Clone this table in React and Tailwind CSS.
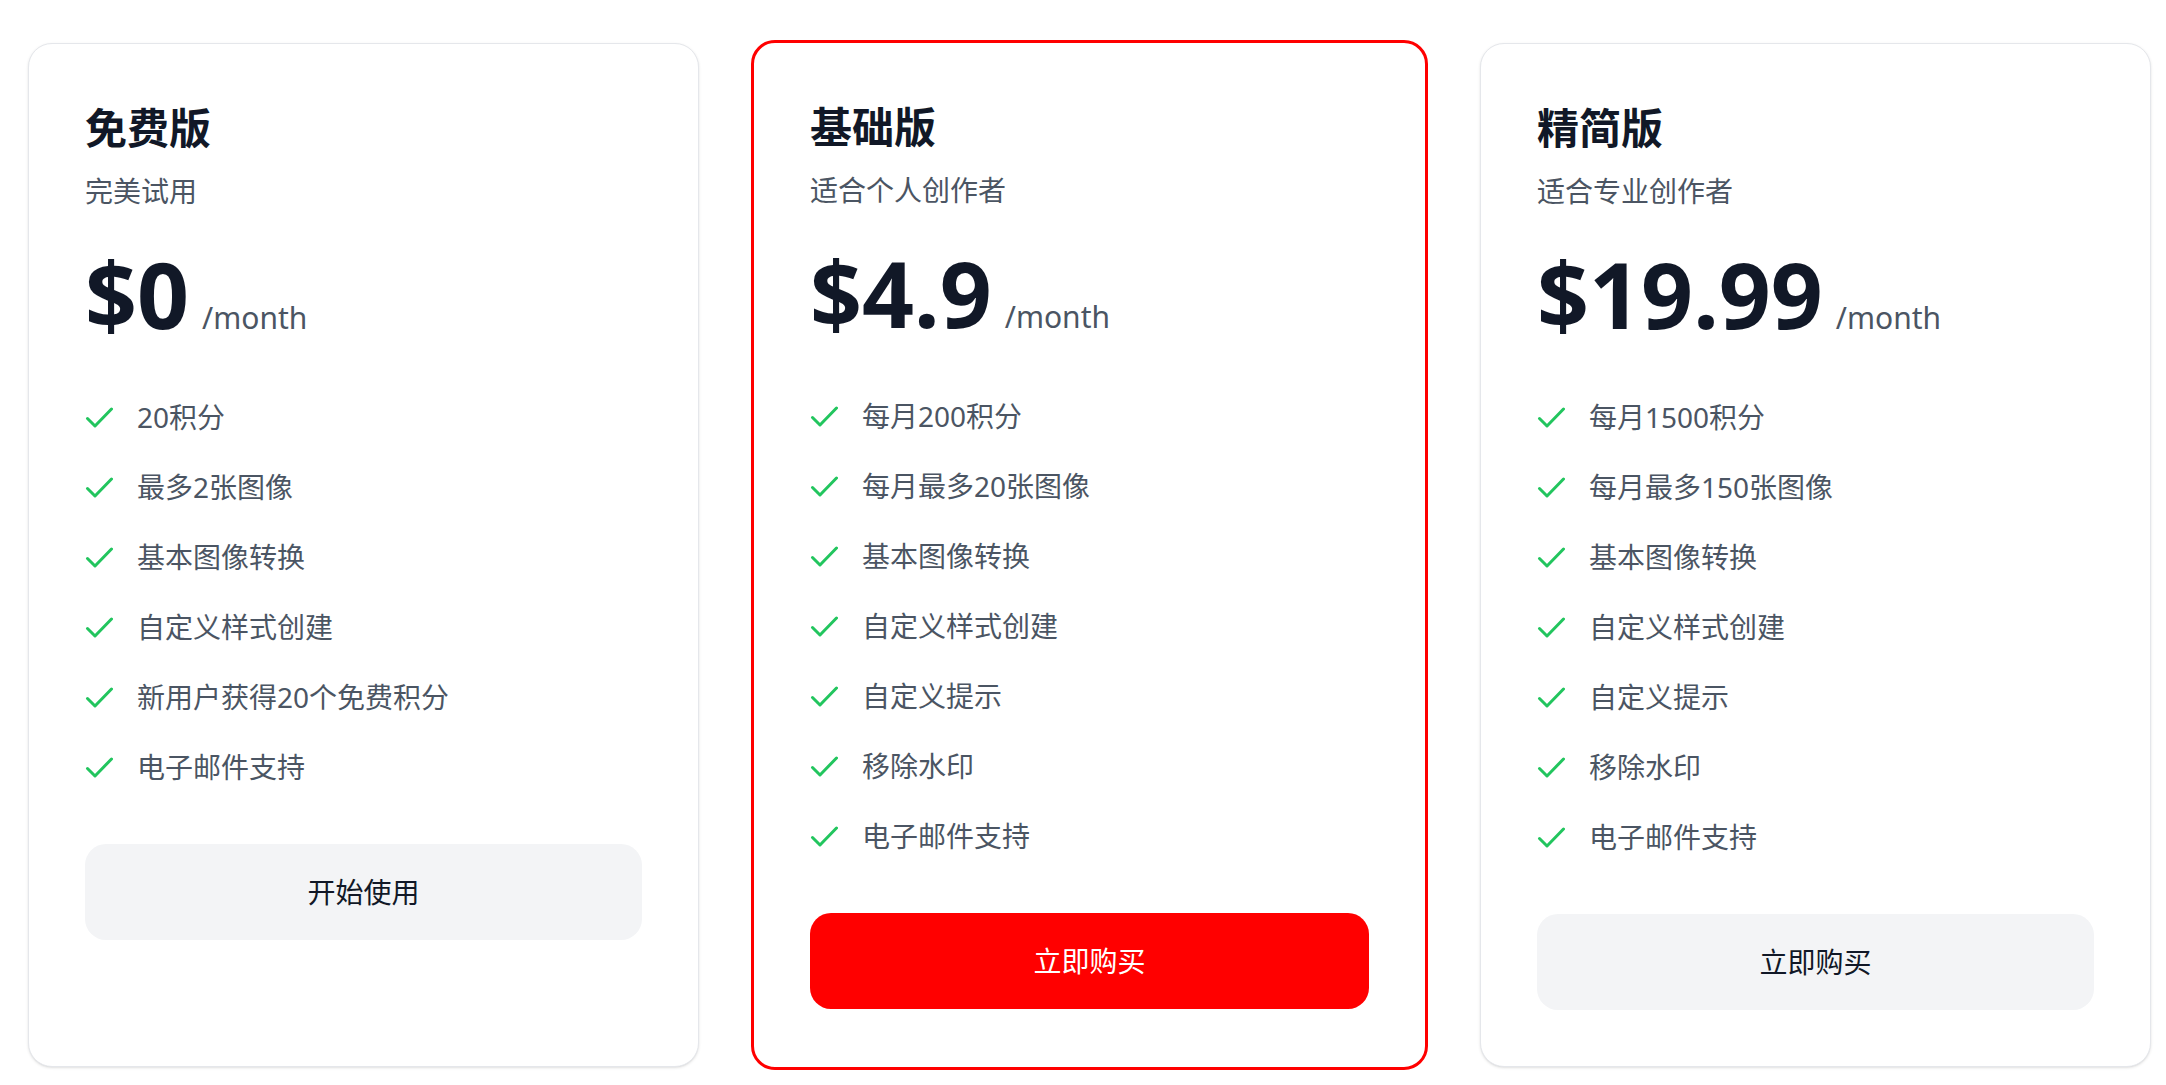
import React from "react";

const plans = [
  {
    name: "免费版",
    desc: "完美试用",
    price: "$0",
    features: ["20积分", "最多2张图像", "基本图像转换", "自定义样式创建", "新用户获得20个免费积分", "电子邮件支持"],
    cta: "开始使用",
    featured: false,
  },
  {
    name: "基础版",
    desc: "适合个人创作者",
    price: "$4.9",
    features: ["每月200积分", "每月最多20张图像", "基本图像转换", "自定义样式创建", "自定义提示", "移除水印", "电子邮件支持"],
    cta: "立即购买",
    featured: true,
  },
  {
    name: "精简版",
    desc: "适合专业创作者",
    price: "$19.99",
    features: ["每月1500积分", "每月最多150张图像", "基本图像转换", "自定义样式创建", "自定义提示", "移除水印", "电子邮件支持"],
    cta: "立即购买",
    featured: false,
  },
];

function CheckMark() {
  return (
    <svg viewBox="0 0 28 28" className="w-[28px] h-[28px] shrink-0" fill="none">
      <path d="M2.5 15.5 10 23 26.5 6" stroke="#22c55e" strokeWidth="3" strokeLinecap="round" strokeLinejoin="round" />
    </svg>
  );
}

function PlanCard({ plan }) {
  return (
    <div
      className={`flex flex-col bg-white rounded-[24px] p-[56px] ${
        plan.featured
          ? "border-[3px] border-[#ff0000] -m-[3px]"
          : "border border-[#e5e7eb] shadow-sm"
      }`}
    >
      <h3 className="text-[42px] leading-[56px] font-bold text-[#111827]">{plan.name}</h3>
      <p className="mt-[14px] text-[28px] leading-[42px] text-[#4b5563]">{plan.desc}</p>

      <div className="mt-[42px] flex items-baseline">
        <span className="text-[91px] leading-[81px] font-bold text-[#111827]">{plan.price}</span>
        <span className="ml-[13px] text-[30px] text-[#4b5563]">/month</span>
      </div>

      <ul className="mt-[56px] flex flex-col gap-[28px]">
        {plan.features.map((f, i) => (
          <li key={i} className="flex items-center gap-[24px] text-[28px] leading-[42px] text-[#4b5563]">
            <CheckMark />
            <span>{f}</span>
          </li>
        ))}
      </ul>

      <button
        className={`mt-[56px] h-[96px] w-full rounded-[21px] text-[28px] ${
          plan.featured ? "bg-[#ff0000] text-white" : "bg-[#f3f4f6] text-[#111827]"
        }`}
      >
        {plan.cta}
      </button>
    </div>
  );
}

export default function App() {
  return (
    <div
      className="min-h-screen bg-white pt-[43px] pb-[20px] pl-[28px] pr-[15px]"
      style={{ fontFamily: '"Noto Sans", "Noto Sans CJK SC", sans-serif' }}
    >
      <div className="grid grid-cols-3 gap-[55px] items-stretch">
        {plans.map((p) => (
          <PlanCard key={p.name} plan={p} />
        ))}
      </div>
    </div>
  );
}
